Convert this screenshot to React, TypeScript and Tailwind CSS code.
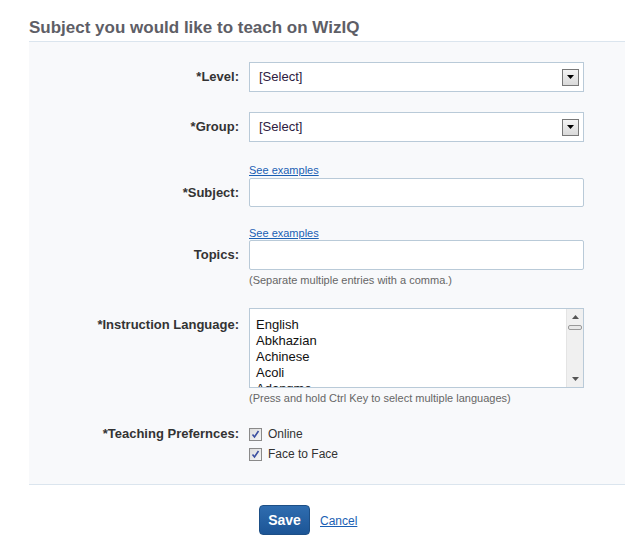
import React from "react";

const languages = ["English", "Abkhazian", "Achinese", "Acoli", "Adangme", "Adygei"];

function SelectArrow() {
    return (
        <span className="flex h-[17px] w-[17px] items-center justify-center border border-[#777] bg-gradient-to-b from-[#f4f4f4] to-[#d9d9d9]">
            <svg width="7" height="4" viewBox="0 0 7 4">
                <path d="M0 0h7L3.5 4z" fill="#000" />
            </svg>
        </span>
    );
}

function FakeSelect() {
    return (
        <div className="flex h-[30px] w-[335px] items-center justify-between border border-[#b9cad8] bg-white pl-[9px] pr-[4px] text-[13px] text-[#2d2040]">
            <span>[Select]</span>
            <SelectArrow />
        </div>
    );
}

function Label({ children }: { children: React.ReactNode }) {
    return <div className="w-[220px] shrink-0 pr-[10px] text-right text-[13px] font-bold text-[#333]">{children}</div>;
}

function Spacer() {
    return <div className="w-[220px] shrink-0" />;
}

function Checkbox() {
    return (
        <span className="flex h-[13px] w-[13px] items-center justify-center border border-[#8a8a8a] bg-gradient-to-br from-[#dcdcdc] to-[#f6f6f6]">
            <svg width="9" height="9" viewBox="0 0 9 9">
                <path d="M1.5 4.5l2 2.5 4-6" stroke="#3b4fa0" strokeWidth="1.6" fill="none" />
            </svg>
        </span>
    );
}

export default function App() {
    return (
        <div className="h-[543px] w-[625px] bg-white pl-[29px] font-['Liberation_Sans',sans-serif]">
            <h2 className="pt-[19px] pb-[4px] text-[17px] font-bold leading-[18px] text-[#5e5e66]">Subject you would like to teach on WizIQ</h2>

            <div className="border-y border-[#dbe5ee] bg-[#f8f9fb] pt-[20px] pb-[22px]">
                <div className="flex items-center">
                    <Label>*Level:</Label>
                    <FakeSelect />
                </div>

                <div className="mt-[20px] flex items-center">
                    <Label>*Group:</Label>
                    <FakeSelect />
                </div>

                <div className="mt-[21px] flex">
                    <Spacer />
                    <a href="#" className="text-[11px] leading-[14px] text-[#1a5fb4] underline">See examples</a>
                </div>
                <div className="mt-[1px] flex items-center">
                    <Label>*Subject:</Label>
                    <div className="h-[29px] w-[335px] rounded-[2px] border border-[#b9cad8] bg-white" />
                </div>

                <div className="mt-[19px] flex">
                    <Spacer />
                    <a href="#" className="text-[11px] leading-[14px] text-[#1a5fb4] underline">See examples</a>
                </div>
                <div className="flex items-center">
                    <Label>Topics:</Label>
                    <div className="h-[30px] w-[335px] rounded-[2px] border border-[#b9cad8] bg-white" />
                </div>
                <div className="mt-[3px] flex">
                    <Spacer />
                    <div className="text-[11px] leading-[14px] text-[#666]">(Separate multiple entries with a comma.)</div>
                </div>

                <div className="mt-[21px] flex items-start">
                    <div className="w-[220px] shrink-0 pt-[7px] pr-[10px] text-right text-[13px] font-bold text-[#333]">*Instruction Language:</div>
                    <div className="flex h-[80px] w-[335px] overflow-hidden border border-[#b9cad8] bg-white">
                        <div className="flex-1 overflow-hidden pt-[8px] pl-[6px] text-[13px] leading-[16px] text-[#111]">
                            {languages.map((lang) => (
                                <div key={lang}>{lang}</div>
                            ))}
                        </div>
                        <div className="flex w-[17px] flex-col items-center border-l border-[#e4e4e4] bg-[#f0f0f0] py-[4px]">
                            <svg width="7" height="4" viewBox="0 0 7 4" className="mt-[2px]">
                                <path d="M3.5 0L7 4H0z" fill="#555" />
                            </svg>
                            <span className="mt-[6px] h-[5px] w-[14px] rounded-[2px] border border-[#999] bg-[#e8e8e8]" />
                            <span className="flex-1" />
                            <svg width="7" height="4" viewBox="0 0 7 4" className="mb-[2px]">
                                <path d="M0 0h7L3.5 4z" fill="#555" />
                            </svg>
                        </div>
                    </div>
                </div>
                <div className="mt-[3px] flex">
                    <Spacer />
                    <div className="text-[11px] leading-[14px] text-[#666]">(Press and hold Ctrl Key to select multiple languages)</div>
                </div>

                <div className="mt-[21px] flex items-start">
                    <div className="w-[220px] shrink-0 pr-[10px] text-right text-[13px] font-bold leading-[16px] text-[#333]">*Teaching Prefernces:</div>
                    <div className="flex flex-col gap-[4px] text-[12px] leading-[16px] text-[#333]">
                        <label className="flex items-center gap-[6px]">
                            <Checkbox />
                            <span>Online</span>
                        </label>
                        <label className="flex items-center gap-[6px]">
                            <Checkbox />
                            <span>Face to Face</span>
                        </label>
                    </div>
                </div>
            </div>

            <div className="mt-[20px] flex items-center pl-[230px]">
                <button className="h-[30px] w-[51px] rounded-[4px] border border-[#1d4f86] bg-gradient-to-b from-[#2f6db0] to-[#1c5596] text-[14px] font-bold text-white">Save</button>
                <a href="#" className="ml-[10px] mt-[2px] text-[12px] text-[#1a5fb4] underline">Cancel</a>
            </div>
        </div>
    );
}
